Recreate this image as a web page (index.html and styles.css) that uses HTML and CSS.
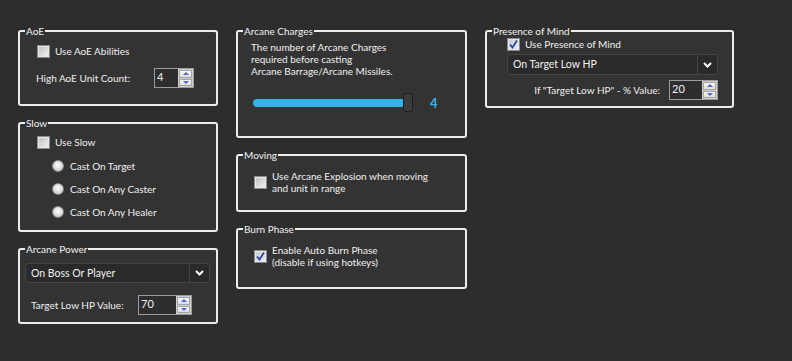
FILE: index.html
```html
<!DOCTYPE html>
<html lang="en">
<head>
    <meta charset="UTF-8">
    <title>Arcane Mage Settings</title>
    <link rel="stylesheet" href="styles.css">
</head>
<body>
    <div class="panels">
        <!-- left column -->
        <div class="col col-1">
            <fieldset class="group group-aoe">
                <legend>AoE</legend>
                <div class="aoe-body">
                    <label class="opt"><span class="check"></span>Use AoE Abilities</label>
                    <div class="field aoe-field">
                        <span class="field-label" style="width: 118px;">High AoE Unit Count:</span>
                        <div class="spin" style="width: 40px;">
                            <span class="spin-val">4</span>
                            <span class="spin-btns"><span class="spin-btn up"></span><span class="spin-btn down"></span></span>
                        </div>
                    </div>
                </div>
            </fieldset>

            <fieldset class="group group-slow">
                <legend>Slow</legend>
                <div class="slow-body">
                    <label class="opt"><span class="check"></span>Use Slow</label>
                    <div class="radios">
                        <label class="radio-opt"><span class="radio"></span>Cast On Target</label>
                        <label class="radio-opt"><span class="radio"></span>Cast On Any Caster</label>
                        <label class="radio-opt"><span class="radio"></span>Cast On Any Healer</label>
                    </div>
                </div>
            </fieldset>

            <fieldset class="group group-power">
                <legend>Arcane Power</legend>
                <div class="power-body">
                    <div class="combo">
                        <span class="combo-text">On Boss Or Player</span>
                        <span class="combo-arrow"><svg width="9" height="6" viewBox="0 0 9 6"><polyline points="1,1 4.5,4.5 8,1" fill="none" stroke="#fff" stroke-width="2"/></svg></span>
                    </div>
                    <div class="field power-field">
                        <span class="field-label" style="width: 107px;">Target Low HP Value:</span>
                        <div class="spin" style="width: 54px;">
                            <span class="spin-val">70</span>
                            <span class="spin-btns"><span class="spin-btn up"></span><span class="spin-btn down"></span></span>
                        </div>
                    </div>
                </div>
            </fieldset>
        </div>

        <!-- middle column -->
        <div class="col col-2">
            <fieldset class="group group-charges">
                <legend>Arcane Charges</legend>
                <div class="charges-body">
                    <p class="note">The number of Arcane Charges<br>required before casting<br>Arcane Barrage/Arcane Missiles.</p>
                    <div class="slider-row">
                        <div class="slider">
                            <div class="track"></div>
                            <div class="thumb"></div>
                        </div>
                        <span class="slider-val">4</span>
                    </div>
                </div>
            </fieldset>

            <fieldset class="group group-moving">
                <legend>Moving</legend>
                <div class="multi-body">
                    <label class="opt"><span class="check"></span><span class="multi">Use Arcane Explosion when moving<br>and unit in range</span></label>
                </div>
            </fieldset>

            <fieldset class="group group-burn">
                <legend>Burn Phase</legend>
                <div class="multi-body">
                    <label class="opt"><span class="check checked"><svg width="11" height="11" viewBox="0 0 11 11"><polyline points="2,5.5 4.5,8.5 9,1.5" fill="none" stroke="#2c43a6" stroke-width="1.8"/></svg></span><span class="multi">Enable Auto Burn Phase<br>(disable if using hotkeys)</span></label>
                </div>
            </fieldset>
        </div>

        <!-- right column -->
        <div class="col col-3">
            <fieldset class="group group-pom">
                <legend>Presence of Mind</legend>
                <div class="pom-body">
                    <label class="opt"><span class="check checked"><svg width="11" height="11" viewBox="0 0 11 11"><polyline points="2,5.5 4.5,8.5 9,1.5" fill="none" stroke="#2c43a6" stroke-width="1.8"/></svg></span>Use Presence of Mind</label>
                    <div class="combo pom-combo">
                        <span class="combo-text">On Target Low HP</span>
                        <span class="combo-arrow"><svg width="9" height="6" viewBox="0 0 9 6"><polyline points="1,1 4.5,4.5 8,1" fill="none" stroke="#fff" stroke-width="2"/></svg></span>
                    </div>
                    <div class="field pom-field">
                        <span class="field-label">If "Target Low HP" - % Value:</span>
                        <div class="spin" style="width: 49px;">
                            <span class="spin-val">20</span>
                            <span class="spin-btns"><span class="spin-btn up"></span><span class="spin-btn down"></span></span>
                        </div>
                    </div>
                </div>
            </fieldset>
        </div>
    </div>
</body>
</html>
```

FILE: styles.css
```css
body {
    margin: 0;
    height: 100vh;
    background: #2d2d2d;
    color: #f0f0f0;
    font-family: "Lato", "Open Sans", sans-serif;
    font-size: 10px;
}

.panels {
    display: flex;
    align-items: flex-start;
    gap: 18px;
    padding: 24px 0 0 18px;
}

.col {
    display: flex;
    flex-direction: column;
    gap: 10px;
}

.col-1 { width: 200px; }
.col-2 { width: 231px; }
.col-3 { width: 249px; }

/* group boxes */
.group {
    margin: 0;
    padding: 0;
    min-width: 0;
    box-sizing: border-box;
    border: 2px solid #ececec;
    border-radius: 3px;
    background: #333333;
}

.group legend {
    margin-left: 5px;
    padding: 0 1px;
    line-height: 14px;
}

.group-aoe { height: 82px; }
.group-slow { height: 116px; }
.group-power { height: 82px; }
.group-charges { height: 114px; }
.group-moving { height: 64px; }
.group-burn { height: 67px; }
.group-pom { height: 84px; }

/* checkbox + radio */
.opt {
    display: flex;
    align-items: center;
    gap: 5px;
    line-height: 13px;
}

.check {
    flex: none;
    width: 13px;
    height: 13px;
    box-sizing: border-box;
    border: 1px solid #8c8c8c;
    background: linear-gradient(135deg, #bcbcbc, #f4f4f4);
    box-shadow: inset 0 0 0 1px #e6e6e6;
    display: flex;
    align-items: center;
    justify-content: center;
}

.check.checked {
    background: linear-gradient(135deg, #c4c9d8, #eef0f6);
}

.radio {
    flex: none;
    width: 12px;
    height: 12px;
    box-sizing: border-box;
    border-radius: 50%;
    border: 1px solid #8a8a8a;
    background: radial-gradient(circle at 50% 40%, #ffffff, #d8d8d8 60%, #b8b8b8);
}

.radio-opt {
    display: flex;
    align-items: center;
    gap: 6px;
    line-height: 12px;
}

/* label + spinner rows */
.field {
    display: flex;
    align-items: center;
}

.spin {
    display: flex;
    height: 20px;
    box-sizing: border-box;
    border: 1px solid #9c9c9c;
    background: #2e2e2e;
}

.spin-val {
    flex: 1;
    padding: 2px 0 0 2px;
    line-height: 12px;
    font-size: 11px;
}

.spin-btns {
    display: flex;
    flex-direction: column;
    gap: 1px;
    width: 15px;
    padding: 1px;
    box-sizing: border-box;
    background: #d0d0d0;
}

.spin-btn {
    flex: 1;
    border: 1px solid #a4a4a4;
    background: linear-gradient(#f8f8f8, #dedede);
    display: flex;
    align-items: center;
    justify-content: center;
}

.spin-btn::after {
    content: "";
    border-left: 3px solid transparent;
    border-right: 3px solid transparent;
}

.spin-btn.up::after { border-bottom: 3px solid #4a6cc8; }
.spin-btn.down::after { border-top: 3px solid #4a6cc8; }

/* combo box */
.combo {
    display: flex;
    height: 20px;
    box-sizing: border-box;
    border: 1px solid #444444;
    border-radius: 3px;
    background: #2a2a2a;
}

.combo-text {
    flex: 1;
    padding-left: 5px;
    line-height: 18px;
    font-size: 10.5px;
}

.combo-arrow {
    width: 19px;
    border-left: 1px solid #444444;
    display: flex;
    align-items: center;
    justify-content: center;
}

/* per group */
.aoe-body {
    display: flex;
    flex-direction: column;
    gap: 10px;
    padding: 7px 0 0 17px;
}

.aoe-field { margin-left: -1px; }

.slow-body {
    padding: 6px 0 0 17px;
}

.radios {
    display: flex;
    flex-direction: column;
    gap: 11px;
    margin-top: 11px;
    padding-left: 15px;
}

.power-body {
    padding: 7px 6px 0 5px;
}

.power-field {
    margin-top: 12px;
    padding-left: 6px;
}

.charges-body {
    padding: 3px 0 0 13px;
}

.note {
    margin: 0;
    line-height: 12px;
}

.slider-row {
    display: flex;
    align-items: center;
    margin-top: 16px;
    padding-left: 2px;
}

.slider {
    display: flex;
    align-items: center;
}

.track {
    width: 152px;
    height: 8px;
    border-radius: 4px;
    background: #33b5e5;
}

.thumb {
    width: 10px;
    height: 19px;
    margin-left: -2px;
    box-sizing: border-box;
    border: 1px solid #1e1e1e;
    border-radius: 3px;
    background: #3b3b3b;
}

.slider-val {
    margin-left: 17px;
    color: #33b5e5;
    font-size: 13px;
    font-weight: bold;
}

.multi-body {
    padding: 8px 0 0 16px;
}

.multi {
    line-height: 12px;
}

.pom-body {
    padding: 0 14px 0 20px;
}

.pom-combo {
    height: 21px;
    margin-top: 3px;
}

.pom-field {
    justify-content: flex-end;
    gap: 9px;
    margin-top: 5px;
}
```
